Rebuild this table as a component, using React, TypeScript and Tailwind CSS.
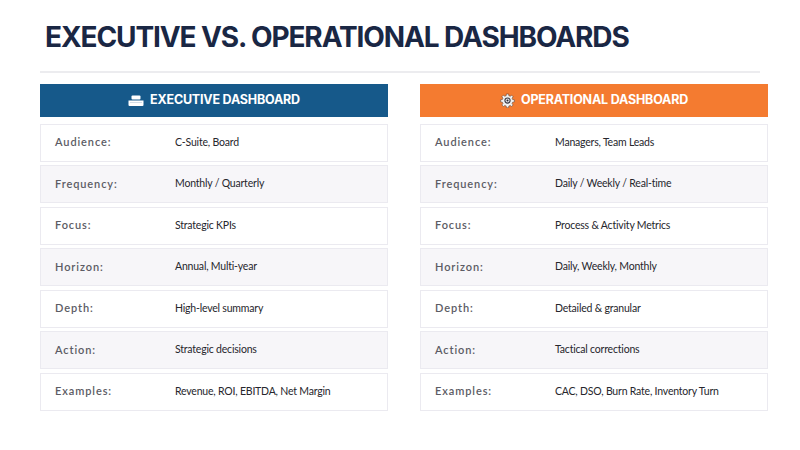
const rows: [string, string, string][] = [
  ['Audience:', 'C-Suite, Board', 'Managers, Team Leads'],
  ['Frequency:', 'Monthly / Quarterly', 'Daily / Weekly / Real-time'],
  ['Focus:', 'Strategic KPIs', 'Process & Activity Metrics'],
  ['Horizon:', 'Annual, Multi-year', 'Daily, Weekly, Monthly'],
  ['Depth:', 'High-level summary', 'Detailed & granular'],
  ['Action:', 'Strategic decisions', 'Tactical corrections'],
  ['Examples:', 'Revenue, ROI, EBITDA, Net Margin', 'CAC, DSO, Burn Rate, Inventory Turn'],
];

const DeskIcon = () => (
  <svg width="16" height="11" viewBox="0 0 16 11" fill="none">
    <rect x="3.5" y="0.5" width="9" height="4" rx="1" fill="#fff" />
    <path d="M0.5 5.5h15v4.5a1 1 0 0 1-1 1h-13a1 1 0 0 1-1-1z" fill="#fff" />
    <rect x="2" y="7.2" width="12" height="0.8" fill="#c9d6e3" />
  </svg>
);

const GearIcon = () => (
  <svg width="15" height="15" viewBox="0 0 24 24">
    <path
      d="M10.3 1.5h3.4l.5 2.9a8 8 0 0 1 2 .85l2.4-1.7 2.4 2.4-1.7 2.4a8 8 0 0 1 .85 2l2.9.5v3.4l-2.9.5a8 8 0 0 1-.85 2l1.7 2.4-2.4 2.4-2.4-1.7a8 8 0 0 1-2 .85l-.5 2.9h-3.4l-.5-2.9a8 8 0 0 1-2-.85l-2.4 1.7-2.4-2.4 1.7-2.4a8 8 0 0 1-.85-2l-2.9-.5v-3.4l2.9-.5a8 8 0 0 1 .85-2l-1.7-2.4 2.4-2.4 2.4 1.7a8 8 0 0 1 2-.85z"
      fill="#f1f1f1"
      stroke="#6b4a3a"
      strokeWidth="1"
    />
    <circle cx="12" cy="12" r="5" fill="#3d3d46" />
    <circle cx="12" cy="12" r="3.2" fill="#e9e9ee" />
    <circle cx="12" cy="12" r="1.6" fill="#2a2a33" />
  </svg>
);

const Panel = ({ side }: { side: 'exec' | 'ops' }) => {
  const exec = side === 'exec';
  return (
    <div className="flex w-[348px] shrink-0 flex-col">
      <div
        className={`flex h-[33px] items-center justify-center gap-[6px] text-[12.5px] font-bold text-white ${
          exec ? 'bg-[#16598a]' : 'bg-[#f47b30]'
        }`}
      >
        {exec ? <DeskIcon /> : <GearIcon />}
        <span className="tracking-[-0.2px]">{exec ? 'EXECUTIVE DASHBOARD' : 'OPERATIONAL DASHBOARD'}</span>
      </div>
      <div className="mt-[7px] flex flex-col gap-[3.5px] font-['Lato',sans-serif]">
        {rows.map(([label, a, b], i) => (
          <div
            key={label}
            className={`flex h-[38px] items-center border border-[#ebeaf0] px-[14px] ${
              i % 2 === 1 ? 'bg-[#f7f6f9]' : 'bg-white'
            }`}
          >
            <span className="w-[120px] shrink-0 text-[11px] font-semibold tracking-[0.9px] text-[#5c5c64]">
              {label}
            </span>
            <span className="text-[10.5px] tracking-[-0.2px] text-[#26262c]">{exec ? a : b}</span>
          </div>
        ))}
      </div>
    </div>
  );
}

export default function App() {
  return (
    <div className="h-[450px] w-[800px] overflow-hidden bg-white font-['Inter',sans-serif]">
      <div className="pt-[18px] pr-[32px] pl-[40px]">
        <h1 className="pl-[5px] text-[28px] leading-[38px] font-bold tracking-[-1.1px] text-[#1a2744]">
          EXECUTIVE VS. OPERATIONAL DASHBOARDS
        </h1>
        <div className="mt-[15px] h-[1.5px] w-[720px] bg-[#ececef]" />
        <div className="mt-[11px] flex gap-[32px]">
          <Panel side="exec" />
          <Panel side="ops" />
        </div>
      </div>
    </div>
  );
}
